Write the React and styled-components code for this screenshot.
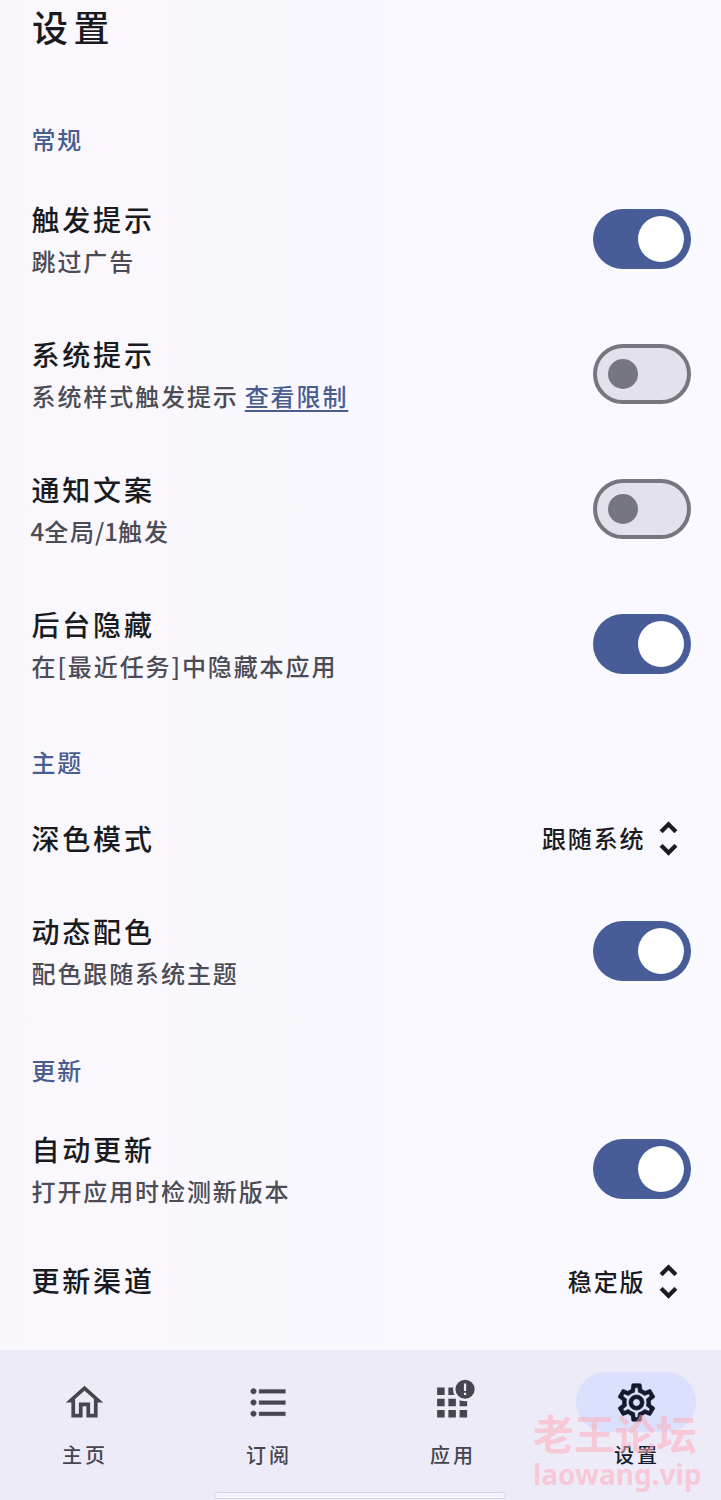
import React from 'react'
import styled, { createGlobalStyle } from 'styled-components'
import { MdOutlineHome, MdFormatListBulleted, MdOutlineSettings, MdUnfoldMore } from 'react-icons/md'

const GlobalStyle = createGlobalStyle`
  * { box-sizing: border-box; }
  body {
    margin: 0;
    background: #faf8ff;
    font-family: "Noto Sans CJK SC", "Noto Sans", sans-serif;
    color: #1a1b21;
  }
  /* the icons carry an empty 24x24 frame path, keep it invisible when stroked */
  svg path[fill="none"] { stroke: none; }
`

const Screen = styled.div`
  position: relative;
  display: flex;
  flex-direction: column;
  width: 721px;
  height: 1500px;
  overflow: hidden;
  background: linear-gradient(90deg, #fbf8fd 0%, #f9f8fe 50%, #f9f9ff 100%);
`

const Header = styled.h1`
  margin: 0;
  height: 88px;
  padding: 0 32px;
  font-size: 36px;
  font-weight: 500;
  line-height: 52px;
  letter-spacing: 5.5px;
`

const Content = styled.main`
  flex: 1;
`

const SectionTitle = styled.h2`
  margin: 0;
  height: 83px;
  padding: 33px 31.5px 0;
  font-size: 24px;
  font-weight: 500;
  line-height: 36px;
  letter-spacing: 1.8px;
  color: #485d92;
`

const Row = styled.div`
  display: flex;
  align-items: center;
  justify-content: space-between;
  height: ${(p) => (p.$compact ? 89.5 : 135)}px;
  padding: 0 30.5px 0 31.5px;
`

const RowText = styled.div`
  padding-top: ${(p) => (p.$compact ? 0 : 2)}px;
  padding-bottom: ${(p) => (p.$compact ? 2 : 0)}px;
`

const RowTitle = styled.div`
  font-size: 28px;
  font-weight: 500;
  line-height: 42px;
  letter-spacing: 2.8px;
`

const RowDesc = styled.div`
  font-size: 24px;
  font-weight: 500;
  line-height: 42px;
  letter-spacing: 1.9px;
  color: #4b4c55;
`

const Narrow = styled.span`
  margin-left: -1px;
  letter-spacing: 0;
`

const Link = styled.a`
  margin-left: 6px;
  color: #485d92;
  text-decoration: underline;
  text-decoration-thickness: 1.5px;
  text-underline-offset: 4px;
`

const Track = styled.div`
  display: flex;
  align-items: center;
  justify-content: ${(p) => (p.$on ? 'flex-end' : 'flex-start')};
  width: 98px;
  height: 60px;
  padding: 0 ${(p) => (p.$on ? 7 : 11)}px;
  border: ${(p) => (p.$on ? 'none' : '4px solid #767680')};
  border-radius: 30px;
  background: ${(p) => (p.$on ? '#485d98' : '#e2e1ec')};
`

const Thumb = styled.div`
  width: ${(p) => (p.$on ? 46 : 30)}px;
  height: ${(p) => (p.$on ? 46 : 30)}px;
  border-radius: 50%;
  background: ${(p) => (p.$on ? '#fff' : '#767680')};
`

const Select = styled.div`
  display: flex;
  align-items: center;
`

const SelectValue = styled.span`
  padding-bottom: 1px;
  font-size: 24px;
  font-weight: 500;
  letter-spacing: 1.9px;
  line-height: 36px;
`

const NavBar = styled.nav`
  display: flex;
  gap: 16px;
  height: 150px;
  padding-top: 22px;
  background: #eeebf8;
`

const NavItem = styled.div`
  display: flex;
  flex-direction: column;
  align-items: center;
  width: 168px;
  color: ${(p) => (p.$active ? '#141a2e' : '#45464f')};
`

const NavIcon = styled.div`
  display: flex;
  align-items: center;
  justify-content: center;
  width: 120px;
  height: 60px;
  border-radius: 30px;
  background: ${(p) => (p.$active ? '#dbe1fc' : 'transparent')};
`

const NavLabel = styled.span`
  margin-top: 8px;
  padding-left: 2px;
  font-size: 20px;
  font-weight: 500;
  line-height: 30px;
  letter-spacing: 3px;
`

const HomeIndicator = styled.div`
  position: absolute;
  left: 214px;
  bottom: 1px;
  width: 292px;
  height: 7px;
  border: 1px solid #d6d3e2;
  border-radius: 3px;
  background: #f6f4fd;
`

const Watermark = styled.div`
  position: absolute;
  left: 533px;
  top: 1408px;
  color: rgba(255, 172, 184, 0.55);
  font-weight: 700;
  white-space: nowrap;
`

const WatermarkName = styled.div`
  font-size: 41px;
  line-height: 48px;
`

const WatermarkSite = styled.div`
  margin-top: 2px;
  font-family: "Noto Sans", sans-serif;
  font-size: 28px;
  line-height: 32px;
`

function Switch({ on }) {
  return (
    <Track $on={on}>
      <Thumb $on={on} />
    </Track>
  )
}

function SwitchRow({ title, desc, on }) {
  return (
    <Row>
      <RowText>
        <RowTitle>{title}</RowTitle>
        <RowDesc>{desc}</RowDesc>
      </RowText>
      <Switch on={on} />
    </Row>
  )
}

function SelectRow({ title, value }) {
  return (
    <Row $compact>
      <RowText $compact>
        <RowTitle>{title}</RowTitle>
      </RowText>
      <Select>
        <SelectValue>{value}</SelectValue>
        <MdUnfoldMore size={45} strokeWidth={0.3} />
      </Select>
    </Row>
  )
}

// grid of apps with an alert badge cut into the top right corner
function AppsAlertIcon() {
  return (
    <svg width="45" height="45" viewBox="0 0 24 24" fill="currentColor" overflow="visible">
      <mask id="badge-cut">
        <rect x="-2" y="-2" width="30" height="30" fill="#fff" />
        <circle cx="18.7" cy="4.9" r="6.4" fill="#000" />
      </mask>
      <path
        mask="url(#badge-cut)"
        d="M3.8 4h4v4h-4zM9.8 4h4v4h-4zM15.8 4h4v4h-4zM3.8 10h4v4h-4zM9.8 10h4v4h-4zM15.8 10h4v4h-4zM3.8 16h4v4h-4zM9.8 16h4v4h-4zM15.8 16h4v4h-4z"
      />
      <circle cx="18.7" cy="4.9" r="5.1" />
      <path d="M18.1 1.9h1.2v4h-1.2zM18.1 6.8h1.2v1.2h-1.2z" fill="#eeebf8" />
    </svg>
  )
}

const tabs = [
  { label: '主页', icon: <MdOutlineHome size={45} /> },
  { label: '订阅', icon: <MdFormatListBulleted size={45} strokeWidth={0.2} /> },
  { label: '应用', icon: <AppsAlertIcon /> },
  { label: '设置', icon: <MdOutlineSettings size={45} strokeWidth={0.35} />, active: true },
]

export default function App() {
  return (
    <>
      <GlobalStyle />
      <Screen>
        <Header>设置</Header>
        <Content>
          <SectionTitle>常规</SectionTitle>
          <SwitchRow title="触发提示" desc="跳过广告" on />
          <SwitchRow title="系统提示" desc={<>系统样式触发提示<Link>查看限制</Link></>} />
          <SwitchRow title="通知文案" desc={<><Narrow>4</Narrow>全局<Narrow>/1</Narrow>触发</>} />
          <SwitchRow title="后台隐藏" desc="在[最近任务]中隐藏本应用" on />
          <SectionTitle>主题</SectionTitle>
          <SelectRow title="深色模式" value="跟随系统" />
          <SwitchRow title="动态配色" desc="配色跟随系统主题" on />
          <SectionTitle>更新</SectionTitle>
          <SwitchRow title="自动更新" desc="打开应用时检测新版本" on />
          <SelectRow title="更新渠道" value="稳定版" />
        </Content>
        <NavBar>
          {tabs.map((tab) => (
            <NavItem key={tab.label} $active={tab.active}>
              <NavIcon $active={tab.active}>{tab.icon}</NavIcon>
              <NavLabel>{tab.label}</NavLabel>
            </NavItem>
          ))}
        </NavBar>
        <HomeIndicator />
        <Watermark>
          <WatermarkName>老王论坛</WatermarkName>
          <WatermarkSite>laowang.vip</WatermarkSite>
        </Watermark>
      </Screen>
    </>
  )
}
